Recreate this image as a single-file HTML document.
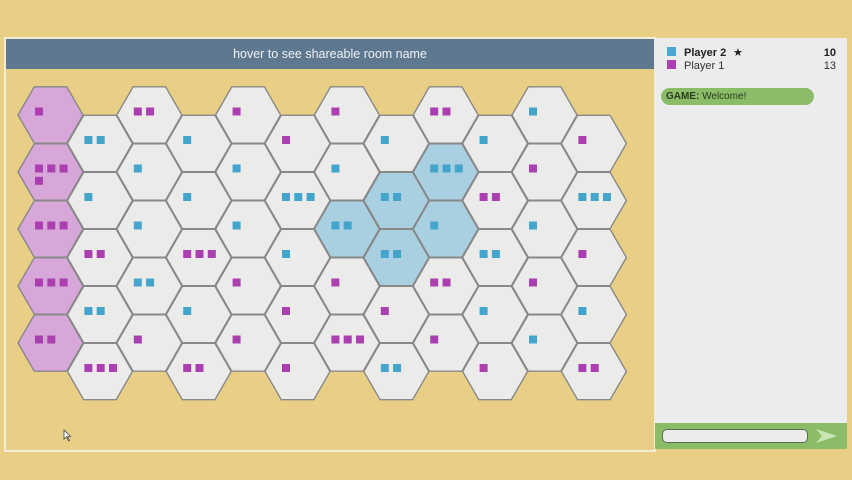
<!DOCTYPE html>
<html><head><meta charset="utf-8"><style>
html,body{margin:0;padding:0;}
body{width:852px;height:480px;background:#e9cf86;position:relative;overflow:hidden;font-family:"Liberation Sans",sans-serif;}
#main{position:absolute;left:4px;top:37px;width:648px;height:411px;border:2px solid #f3ecd6;background:#e9cf86;}
#hdr{position:absolute;left:0;top:0;width:648px;height:30px;background:#5e7890;color:#eef1f4;font-size:12.5px;text-align:center;line-height:30px;}
#side{position:absolute;left:655px;top:38px;width:192px;height:411px;background:#ececec;}
.p{position:absolute;font-size:11px;color:#333;}
#chatbar{position:absolute;left:655px;top:423px;width:192px;height:26px;background:#8bbd68;}
#inp{position:absolute;left:7px;top:6px;width:144px;height:12px;border:1.5px solid #5d6b55;border-radius:5px;background:#ececec;}
svg{position:absolute;left:0;top:0;}
</style></head><body>
<div id="main"><div id="hdr">hover to see shareable room name</div></div>
<div id="side">
 <div style="position:absolute;left:12px;top:9px;width:9px;height:9px;background:#4aa8d2"></div>
 <div style="position:absolute;left:12px;top:22px;width:9px;height:9px;background:#ab3fb0"></div>
 <div class="p" style="left:29px;top:9px;font-weight:bold;color:#222">Player 2</div>
 <div class="p" style="left:78px;top:8px;color:#222">★</div>
 <div class="p" style="right:11px;top:9px;font-weight:bold;color:#222">10</div>
 <div class="p" style="left:29px;top:22px;">Player 1</div>
 <div class="p" style="right:11px;top:22px;">13</div>
 <div style="position:absolute;left:6px;top:50px;width:153px;height:17px;border-radius:9px;background:#8bbd68;font-size:10px;line-height:17px;color:#2c3a22;padding-left:5px;box-sizing:border-box"><b>GAME:</b> Welcome!</div>
</div>
<div id="chatbar"><div id="inp"></div>
<svg style="left:160px;top:5px" width="24" height="16"><path d="M1 1 L22 8 L1 15 L7 8 Z" fill="#c8e6b4"/></svg></div>
<svg width="852" height="480" id="board"></svg>
<svg width="852" height="480"><path d="M64 430 L64 439 L66.5 437 L68.5 441 L69.5 440.5 L67.5 436.5 L70.5 436.5 Z" fill="#fff" stroke="#444" stroke-width="0.8"/></svg>
<script>
var data=[
["pm1","pm4","pm3","pm3","pm2"],
["wb2","wb1","wm2","wb2","wm3"],
["wm2","wb1","wb1","wb2","wm1"],
["wb1","wb1","wm3","wb1","wm2"],
["wm1","wb1","wb1","wm1","wm1"],
["wm1","wb3","wb1","wm1","wm1"],
["wm1","wb1","lb2","wm1","wm3"],
["wb1","lb2","lb2","wm1","wb2"],
["wm2","lb3","lb1","wm2","wm1"],
["wb1","wm2","wb2","wb1","wm1"],
["wb1","wm1","wb1","wm1","wb1"],
["wm1","wb3","wm1","wb1","wm2"]];
var fills={p:"#d7a7d9",w:"#ebebea",l:"#a9d0e1"},cols={m:"#ab3fb0",b:"#44a5cc"};
var s="",S=32.5,H=28.2;
for(var c=0;c<12;c++)for(var r=0;r<5;r++){
 var cx=50.5+49.4*c,cy=115+(c%2?28.5:0)+57*r,d=data[c][r];
 var pts=[[cx-S,cy],[cx-S/2,cy-H],[cx+S/2,cy-H],[cx+S,cy],[cx+S/2,cy+H],[cx-S/2,cy+H]].map(function(p){return p[0].toFixed(1)+","+p[1].toFixed(1)}).join(" ");
 s+='<polygon points="'+pts+'" fill="'+fills[d[0]]+'" stroke="#888" stroke-width="1.4"/>';
 var n=+d[2];
 for(var i=0;i<n;i++){var x=cx-15.5+(i%3)*12.3,y=cy-7.5+Math.floor(i/3)*12.3;
 s+='<rect x="'+x.toFixed(1)+'" y="'+y.toFixed(1)+'" width="8" height="8" fill="'+cols[d[1]]+'"/>';}
}
document.getElementById("board").innerHTML=s;
</script>
</body></html>
